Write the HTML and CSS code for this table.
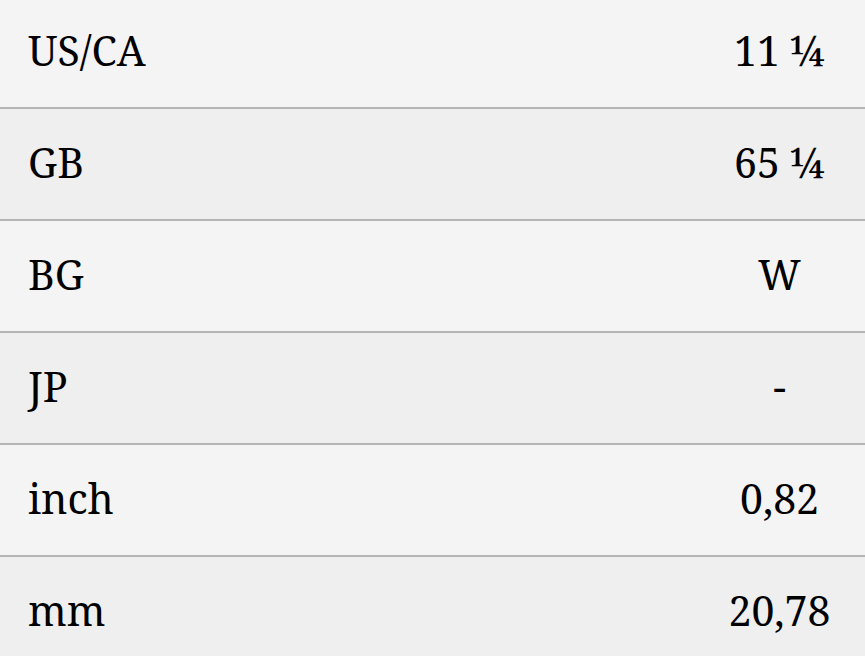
FILE: index.html
```html
<!DOCTYPE html>
<html lang="en">

<head>
    <meta charset="UTF-8">
    <meta name="viewport" content="width=device-width, initial-scale=1.0">
    <title>Ring Size</title>
    <link rel="stylesheet" href="styles.css">
</head>

<body>

    <table class="size-table">
        <tbody>
            <tr>
                <td>US/CA</td>
                <td class="value">11 ¼</td>
            </tr>
            <tr>
                <td>GB</td>
                <td class="value">65 ¼</td>
            </tr>
            <tr>
                <td>BG</td>
                <td class="value">W</td>
            </tr>
            <tr>
                <td>JP</td>
                <td class="value">-</td>
            </tr>
            <tr>
                <td>inch</td>
                <td class="value">0,82</td>
            </tr>
            <tr>
                <td>mm</td>
                <td class="value">20,78</td>
            </tr>
        </tbody>
    </table>

</body>

</html>
```

FILE: styles.css
```css
body {
    font-family: "Noto Serif", "DejaVu Serif", serif;
    background-color: #efefef;
    color: #000;
    margin: -3px 0 0 0;
}

.size-table {
    width: 100%;
    border-collapse: collapse;
}

.size-table tr {
    background-color: #f4f4f4;
    border-bottom: 2px solid #b5b5b5;
}

.size-table tr:nth-child(even) {
    background-color: #efefef;
}

.size-table td {
    height: 106px;
    padding: 0 28px 4px;
    font-size: 41px;
    vertical-align: middle;
}

.size-table td.value {
    width: 115px;
    text-align: center;
}
```
